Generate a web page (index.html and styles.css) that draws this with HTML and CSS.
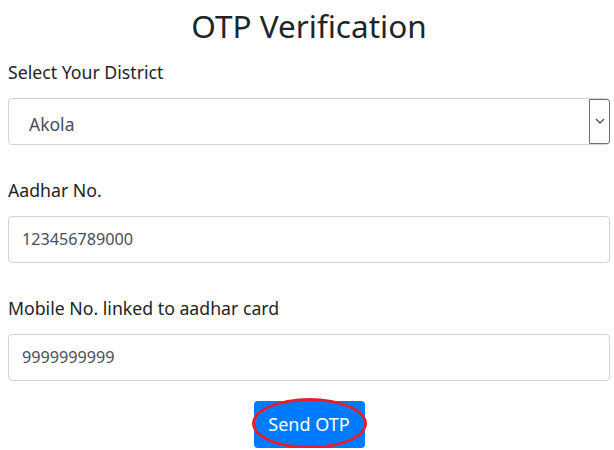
FILE: index.html
```html
<!DOCTYPE html>
<html lang="en">
<head>
    <meta charset="UTF-8">
    <meta name="viewport" content="width=device-width, initial-scale=1.0">
    <title>OTP Verification</title>
    <link rel="stylesheet" href="styles.css">
</head>
<body>
    <div class="container">
        <h2>OTP Verification</h2>

        <div class="form-group">
            <label for="district">Select Your District</label>
            <div class="select-box">
                <select id="district">
                    <option>Akola</option>
                    <option>Amravati</option>
                    <option>Buldhana</option>
                </select>
                <span class="select-arrow">
                    <svg width="10" height="6" viewBox="0 0 10 6"><path d="M1 1l4 4 4-4" fill="none" stroke="#555" stroke-width="1.4"/></svg>
                </span>
            </div>
        </div>

        <div class="form-group">
            <label for="aadhar">Aadhar No.</label>
            <input type="text" id="aadhar" class="form-control" value="123456789000">
        </div>

        <div class="form-group">
            <label for="mobile">Mobile No. linked to aadhar card</label>
            <input type="text" id="mobile" class="form-control" value="9999999999">
        </div>

        <div class="actions">
            <button class="btn-primary">Send OTP<span class="mark"></span></button>
        </div>
    </div>
</body>
</html>
```

FILE: styles.css
```css
/* General Styling */
* {
    margin: 0;
    padding: 0;
    box-sizing: border-box;
}

body {
    font-family: 'Noto Sans', 'Open Sans', sans-serif;
    background: #fff;
    color: #212529;
    padding: 0 4px 0 8px;
}

h2 {
    text-align: center;
    font-size: 31.5px;
    font-weight: 400;
    line-height: 1.2;
    padding-top: 7px;
    margin-bottom: 15px;
}

.form-group {
    margin-bottom: 33px;
}

label {
    display: block;
    font-size: 17.7px;
    line-height: 24px;
    margin-bottom: 14px;
}

.form-control, .select-box {
    width: 100%;
    height: 47px;
    border: 1px solid #ced4da;
    border-radius: 4px;
    background: #fff;
}

.form-control {
    padding: 0 13px;
    font-family: inherit;
    font-size: 16.2px;
    color: #495057;
    outline: none;
}

.select-box {
    display: flex;
    align-items: stretch;
}

select {
    flex: 1;
    appearance: none;
    -webkit-appearance: none;
    border: none;
    background: transparent;
    padding: 5px 20px 0;
    font-family: inherit;
    font-size: 17.5px;
    color: #495057;
    outline: none;
}

.select-arrow {
    width: 21px;
    margin: 0 -1px 0 0;
    border: 1px solid #707070;
    border-radius: 0 3px 3px 0;
    display: flex;
    align-items: center;
    justify-content: center;
    background: #fff;
}

.actions {
    display: flex;
    justify-content: center;
    margin-top: -13px;
}

.btn-primary {
    position: relative;
    width: 111px;
    height: 47px;
    background: #007bff;
    color: #fff;
    border: none;
    border-radius: 4px;
    font-family: inherit;
    font-size: 18px;
    cursor: pointer;
}

.mark {
    position: absolute;
    left: -2px;
    top: -3px;
    width: 115px;
    height: 51px;
    border: 3.5px solid #e0212f;
    border-radius: 50%;
}
```
